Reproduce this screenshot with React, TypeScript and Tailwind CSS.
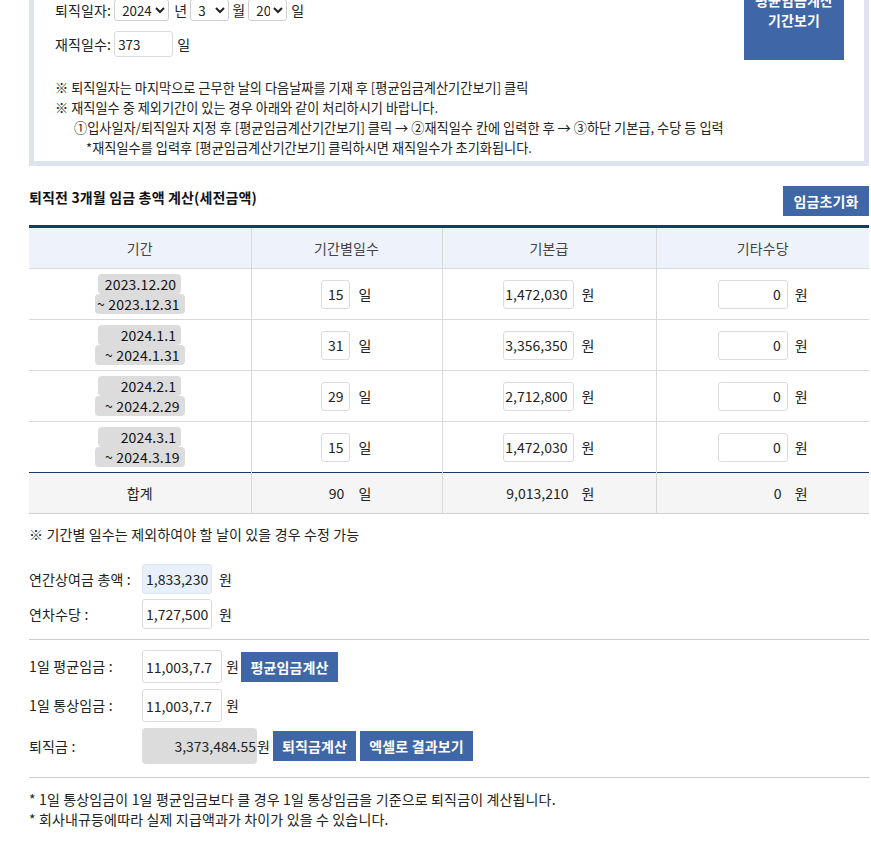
import React from 'react';

const rows = [
  { from: '2023.12.20', to: '~ 2023.12.31', days: '15', base: '1,472,030', etc: '0' },
  { from: '2024.1.1', to: '~ 2024.1.31', days: '31', base: '3,356,350', etc: '0' },
  { from: '2024.2.1', to: '~ 2024.2.29', days: '29', base: '2,712,800', etc: '0' },
  { from: '2024.3.1', to: '~ 2024.3.19', days: '15', base: '1,472,030', etc: '0' },
];

const btn = 'bg-[#3f66a6] text-white font-bold text-[14px] leading-[20px] flex items-center justify-center';
const cellInput =
  'h-[29px] border border-[#dcdcdc] rounded-[3px] bg-white text-right pr-[6px] text-[14px] tracking-normal text-[#222] outline-none';
const sel =
  'h-[22px] border border-[#cfcfcf] rounded-[3px] bg-white text-[13.33px] tracking-normal text-[#222] pl-[3px]';
const field = 'border rounded-[3px] px-[3px] tracking-normal outline-none';

const DateSelects = ({ y, m, d }: { y: string; m: string; d: string }) => (
  <>
    <select defaultValue={y} className={`${sel} w-[55px]`}>
      <option>{y}</option>
    </select>
    <span className="ml-[5px]">년</span>
    <select defaultValue={m} className={`${sel} w-[39px] ml-[3px]`}>
      <option>{m}</option>
    </select>
    <span className="ml-[3px]">월</span>
    <select defaultValue={d} className={`${sel} w-[39px] ml-[3px]`}>
      <option>{d}</option>
    </select>
    <span className="ml-[4px]">일</span>
  </>
);

export default function App() {
  return (
    <div className="bg-white text-[#222] text-[14px] tracking-[0.15px] font-[Noto_Sans_CJK_KR,Noto_Sans,sans-serif] pb-[20px]">
      <div className="ml-[29px] w-[840px] mt-[-61px]">
        {/* 기간 설정 패널 */}
        <div className="border-[5px] border-[#dfe3f0] pt-[15px] pb-[3px] pl-[21px] pr-[20px]">
          <div className="flex justify-between items-start">
            <div>
              <div className="h-[34px] flex items-center">
                <span className="mr-[3px]">입사일자:</span>
                <DateSelects y="2023" m="3" d="13" />
              </div>
              <div className="h-[34px] flex items-center">
                <span className="mr-[3px]">퇴직일자:</span>
                <DateSelects y="2024" m="3" d="20" />
              </div>
              <div className="h-[34px] flex items-center">
                <span className="mr-[3px]">재직일수:</span>
                <input
                  defaultValue="373"
                  className={`${field} w-[59px] h-[26px] border-[#dcdcdc] text-[13.33px]`}
                />
                <span className="ml-[4px]">일</span>
              </div>
            </div>
            <button className={`${btn} w-[100px] h-[100px] mt-[1px]`}>
              평균임금계산
              <br />
              기간보기
            </button>
          </div>
          <div className="mt-[17px] text-[13.2px] tracking-normal leading-[20px] text-[#222]">
            <p>※ 퇴직일자는 마지막으로 근무한 날의 다음날짜를 기재 후 [평균임금계산기간보기] 클릭</p>
            <p>※ 재직일수 중 제외기간이 있는 경우 아래와 같이 처리하시기 바랍니다.</p>
            <p className="pl-[19px]">
              ①입사일자/퇴직일자 지정 후 [평균임금계산기간보기] 클릭 → ②재직일수 칸에 입력한 후 → ③하단 기본급, 수당 등 입력
            </p>
            <p className="pl-[31px]">*재직일수를 입력후 [평균임금계산기간보기] 클릭하시면 재직일수가 초기화됩니다.</p>
          </div>
        </div>

        {/* 3개월 임금 */}
        <div className="mt-[20px] flex justify-between items-start">
          <h3 className="font-bold text-[14px] leading-[22px] text-[#111]">퇴직전 3개월 임금 총액 계산(세전금액)</h3>
          <button className={`${btn} w-[86px] h-[30px]`}>임금초기화</button>
        </div>

        <table className="w-full mt-[9px] border-collapse border-t-[3px] border-t-[#173a66]">
          <colgroup>
            <col className="w-[222px]" />
            <col className="w-[191px]" />
            <col className="w-[214px]" />
            <col className="w-[213px]" />
          </colgroup>
          <thead>
            <tr className="bg-[#eef3fb] h-[42px] text-[#444]">
              <th className="font-normal border-b border-[#d9d9d9]">기간</th>
              <th className="font-normal border-b border-l border-[#d9d9d9]">기간별일수</th>
              <th className="font-normal border-b border-l border-[#d9d9d9]">기본급</th>
              <th className="font-normal border-b border-l border-[#d9d9d9]">기타수당</th>
            </tr>
          </thead>
          <tbody>
            {rows.map((r, i) => (
              <tr
                key={i}
                className={`h-[51px] ${i === rows.length - 1 ? 'border-b border-[#173a66]' : 'border-b border-[#d9d9d9]'}`}
              >
                <td className="text-center leading-[20px] text-[#111]">
                  <div>
                    <span className="inline-block w-[83px] bg-[#dcdcdc] rounded-[4px] text-right pr-[5px]">
                      {r.from}
                    </span>
                  </div>
                  <div>
                    <span className="inline-block w-[90px] bg-[#dcdcdc] rounded-[4px] text-right pr-[5px]">
                      {r.to}
                    </span>
                  </div>
                </td>
                <td className="border-l border-[#d9d9d9] text-center">
                  <input defaultValue={r.days} className={`${cellInput} w-[29px]`} />
                  <span className="ml-[8px]">일</span>
                </td>
                <td className="border-l border-[#d9d9d9] text-center">
                  <input defaultValue={r.base} className={`${cellInput} w-[71px]`} />
                  <span className="ml-[7px]">원</span>
                </td>
                <td className="border-l border-[#d9d9d9] text-center">
                  <input defaultValue={r.etc} className={`${cellInput} w-[70px]`} />
                  <span className="ml-[7px]">원</span>
                </td>
              </tr>
            ))}
            <tr className="h-[41px] bg-[#f5f5f5] border-b border-[#cfcfcf]">
              <td className="text-center">합계</td>
              <td className="border-l border-[#d9d9d9] text-center">
                <span className="inline-block w-[29px] text-right pr-[6px]">90</span>
                <span className="ml-[8px]">일</span>
              </td>
              <td className="border-l border-[#d9d9d9] text-center">
                <span className="inline-block w-[71px] text-right pr-[6px] tracking-normal">9,013,210</span>
                <span className="ml-[7px]">원</span>
              </td>
              <td className="border-l border-[#d9d9d9] text-center">
                <span className="inline-block w-[70px] text-right pr-[6px]">0</span>
                <span className="ml-[7px]">원</span>
              </td>
            </tr>
          </tbody>
        </table>

        <p className="mt-[10px] leading-[20px]">※ 기간별 일수는 제외하여야 할 날이 있을 경우 수정 가능</p>

        {/* 상여금 / 연차 */}
        <div className="mt-[20px] flex items-center">
          <span className="w-[113px]">연간상여금 총액 :</span>
          <input defaultValue="1,833,230" className={`${field} w-[70px] h-[30px] bg-[#e8f0fe] border-[#dce4f0]`} />
          <span className="ml-[7px]">원</span>
        </div>
        <div className="mt-[5px] flex items-center">
          <span className="w-[113px]">연차수당 :</span>
          <input defaultValue="1,727,500" className={`${field} w-[70px] h-[30px] bg-white border-[#dcdcdc]`} />
          <span className="ml-[7px]">원</span>
        </div>

        <hr className="mt-[10px] border-t border-[#cccccc]" />

        {/* 평균임금 / 퇴직금 */}
        <div className="mt-[10px] flex items-center">
          <span className="w-[113px]">1일 평균임금 :</span>
          <input defaultValue="11,003,7.7" className={`${field} w-[80px] h-[33px] bg-white border-[#dcdcdc]`} />
          <span className="ml-[4px]">원</span>
          <button className={`${btn} ml-[2px] w-[97px] h-[30px]`}>평균임금계산</button>
        </div>
        <div className="mt-[6px] flex items-center">
          <span className="w-[113px]">1일 통상임금 :</span>
          <input defaultValue="11,003,7.7" className={`${field} w-[80px] h-[33px] bg-white border-[#dcdcdc]`} />
          <span className="ml-[4px]">원</span>
        </div>
        <div className="mt-[6px] flex items-center">
          <span className="w-[113px]">퇴직금 :</span>
          <span className="w-[115px] h-[36px] bg-[#dcdcdc] rounded-[4px] flex items-center justify-end pr-[1px] tracking-normal">
            3,373,484.55
          </span>
          <span>원</span>
          <button className={`${btn} ml-[3px] w-[83px] h-[30px]`}>퇴직금계산</button>
          <button className={`${btn} ml-[4px] w-[113px] h-[30px]`}>엑셀로 결과보기</button>
        </div>

        <hr className="mt-[13px] border-t border-[#cccccc]" />

        <div className="mt-[11px] leading-[20px]">
          <p>* 1일 통상임금이 1일 평균임금보다 클 경우 1일 통상임금을 기준으로 퇴직금이 계산됩니다.</p>
          <p>* 회사내규등에따라 실제 지급액과가 차이가 있을 수 있습니다.</p>
        </div>
      </div>
    </div>
  );
}
